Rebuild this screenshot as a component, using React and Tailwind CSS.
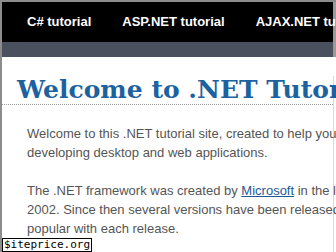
import React from 'react';

const navItems = ['C# tutorial', 'ASP.NET tutorial', 'AJAX.NET tutorial', 'VB.NET tutorial'];

const App = () => {
  return (
    <div className="relative w-[336px] h-[252px] overflow-hidden bg-white border-t-2 border-l-2 border-[#8c8c8c] font-['Liberation_Sans',Arial,sans-serif]">
      {/* top nav */}
      <div className="h-[40px] bg-black flex items-center gap-[31px] pl-[25px] whitespace-nowrap text-white font-bold text-[13px] border-r-[3px] border-[#9a9a9a]">
        {navItems.map((item) => (
          <span key={item}>{item}</span>
        ))}
      </div>
      <div className="h-[15px] bg-[#4a505d] border-r-[3px] border-[#9a9a9a]" />

      <div className="border-r border-[#d9d9d9] mr-[2px] h-full">
        <h1 className="mt-[19px] pl-[15px] pb-[1px] border-b border-dotted border-[#9a9a9a] whitespace-nowrap font-['DejaVu_Serif',Georgia,serif] font-bold text-[25px] leading-[27px] text-[#1c62a0]">
          Welcome to .NET Tutorial
        </h1>

        <div className="pl-[25px] pt-[19px] text-[13px] leading-[19px] text-[#555555] whitespace-nowrap">
          <p className="mb-[19px]">
            Welcome to this .NET tutorial site, created to help you
            <br />
            developing desktop and web applications.
          </p>
          <p>
            The .NET framework was created by{' '}
            <a href="#" className="text-[#1c5a91] underline">Microsoft</a> in the late 1990s
            <br />
            2002. Since then several versions have been released
            <br />
            popular with each release.
          </p>
        </div>
      </div>

      <div className="absolute left-0 bottom-0 h-[14px] px-[1px] border border-black bg-white font-['DejaVu_Sans_Mono',monospace] text-[11px] leading-[12px] text-black">
        $iteprice.org
      </div>
    </div>
  );
};

export default App;
